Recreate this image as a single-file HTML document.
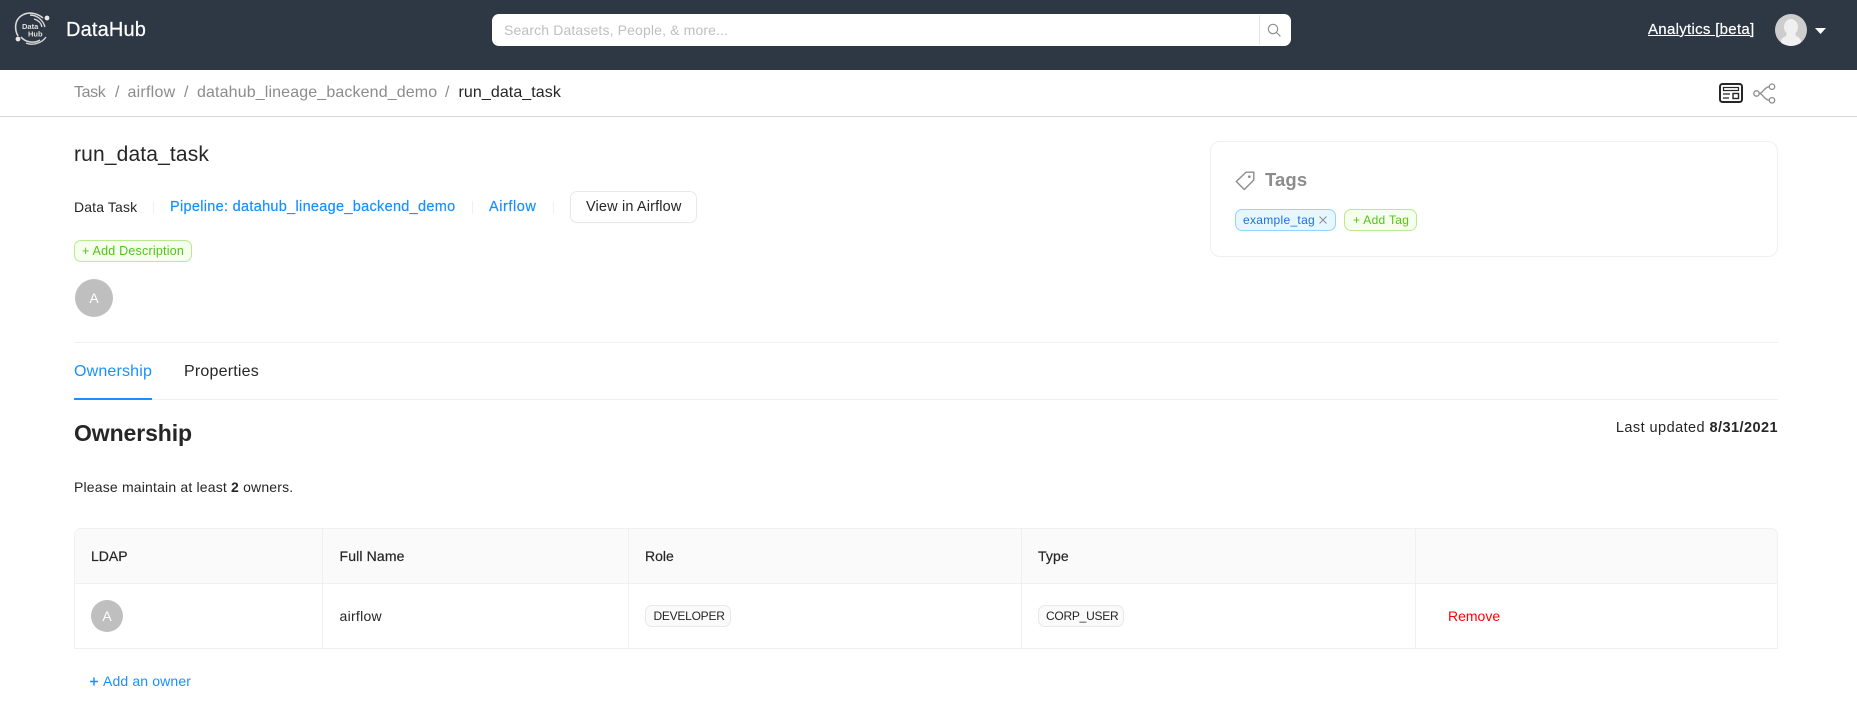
<!DOCTYPE html>
<html lang="en"><head><meta charset="utf-8"><title>DataHub</title>
<style>
html,body{margin:0;padding:0;background:#fff}
body{width:1857px;height:728px;position:relative;overflow:hidden;font-family:"Liberation Sans",sans-serif;font-size:14px;color:#262626}
.a{position:absolute;box-sizing:border-box}
.t{position:absolute;white-space:nowrap;line-height:20px;height:20px}
.med{-webkit-text-stroke:.2px currentColor}
.g{color:#8c8c8c}.b{color:#1890ff}
.chip{position:absolute;box-sizing:border-box;border-radius:7px}
.line{position:absolute;background:#f0f0f0}
</style></head><body>

<div class="a" style="left:0;top:0;width:1857px;height:70px;background:#2e3845"></div>
<svg class="a" style="left:12px;top:9px" width="42" height="38" viewBox="0 0 42 38" fill="none" stroke="#d9d9d9">
<path d="M6 27C2 20 3 11 9 7C16 2 25 4 31 9" stroke-width="1.6"/>
<path d="M9 28C13 33 22 35 28 31" stroke-width="1.5"/>
<path d="M18 6C25 6 31 11 33 18" stroke-width="1.4"/>
<path d="M22 10C26 11 29 14 30 18" stroke-width="1.3"/>
<path d="M14 34C21 37 30 34 34 28" stroke-width="1.3"/>
<circle cx="35" cy="9" r="2.4" fill="#e8e8e8" stroke="none"/><circle cx="6" cy="30" r="2.4" fill="#e8e8e8" stroke="none"/>
<text x="10" y="20" font-family="Liberation Sans" font-size="7.5" font-weight="700" fill="#e0e0e0" stroke="none">Data</text>
<text x="16" y="27.500" font-family="Liberation Sans" font-size="7.5" font-weight="700" fill="#e0e0e0" stroke="none">Hub</text>
</svg>
<div class="t med" style="left:66px;top:20px;font-size:20px;color:#fff;letter-spacing:.15px">DataHub</div>

<div class="a" style="left:492px;top:14px;width:799px;height:32px;background:#fff;border-radius:7px"></div>
<div class="t" style="left:504px;top:20px;color:#bfbfbf;letter-spacing:.14px">Search Datasets, People, &amp; more...</div>
<div class="line" style="left:1259px;top:15px;width:1px;height:30px;background:#e6e6e6"></div>
<svg class="a" style="left:1267px;top:23px" width="14" height="14" viewBox="0 0 14 14" fill="none" stroke="#8c8c8c" stroke-width="1.1"><circle cx="6" cy="6" r="4.700"/><path d="M9.400 9.400L13.400 13.400"/></svg>

<div class="t med" style="left:1648px;top:20px;font-size:15px;color:#fff;letter-spacing:.3px;text-decoration:underline">Analytics [beta]</div>
<svg class="a" style="left:1775px;top:14px" width="32" height="32" viewBox="0 0 32 32"><defs><clipPath id="c"><circle cx="16" cy="16" r="16"/></clipPath></defs><circle cx="16" cy="16" r="16" fill="#cdcdcd"/><g clip-path="url(#c)" fill="#f0f0f0"><ellipse cx="16" cy="13" rx="7" ry="8"/><path d="M12 18h8l1 4c3 1.500 5 2.500 5 6v5H6v-5c0-3.500 2-4.500 5-6z"/></g></svg>
<svg class="a" style="left:1815px;top:28px" width="11" height="6" viewBox="0 0 11 6"><path d="M0 0H11L5.500 6Z" fill="#fff"/></svg>

<div class="t g" style="left:74px;top:83px;font-size:16px;letter-spacing:-.4px">Task</div>
<div class="t g" style="left:115px;top:83px;font-size:16px">/</div>
<div class="t g" style="left:127.500px;top:83px;font-size:16px;letter-spacing:.24px">airflow</div>
<div class="t g" style="left:184px;top:83px;font-size:16px">/</div>
<div class="t g" style="left:197px;top:83px;font-size:16px;letter-spacing:.13px">datahub_lineage_backend_demo</div>
<div class="t g" style="left:445px;top:83px;font-size:16px">/</div>
<div class="t" style="left:458.500px;top:83px;font-size:16px;letter-spacing:.08px">run_data_task</div>
<svg class="a" style="left:1719px;top:83px" width="24" height="20" viewBox="0 0 24 20" fill="none" stroke="#262626"><rect x="1" y="1" width="22" height="18" rx="2.500" stroke-width="2"/><rect x="4.500" y="4.500" width="15" height="3" stroke-width="1.200"/><path d="M4 11H11M4 15H10" stroke-width="1.200"/><rect x="14" y="10.500" width="5.500" height="5" stroke-width="1.400"/></svg>
<svg class="a" style="left:1753px;top:83px" width="23" height="21" viewBox="0 0 23 21" fill="none" stroke="#8c8c8c" stroke-width="1.300"><circle cx="3.500" cy="10.500" r="2.700"/><circle cx="19" cy="3.700" r="2.700"/><circle cx="19" cy="17.300" r="2.700"/><path d="M6.200 10.500C10 10.500 11 4 16.300 3.700M6.200 10.500C10 10.500 11 17 16.300 17.300"/></svg>
<div class="line" style="left:0;top:116px;width:1857px;height:1px;background:#d9d9d9"></div>

<div class="t" style="left:74px;top:145px;font-size:21px;letter-spacing:.15px">run_data_task</div>
<div class="t" style="left:74px;top:197px;letter-spacing:.14px">Data Task</div>
<div class="line" style="left:153px;top:201px;width:1px;height:13px"></div>
<div class="t b med" style="left:170px;top:197px;font-size:14.500px;letter-spacing:.3px">Pipeline: datahub_lineage_backend_demo</div>
<div class="line" style="left:472px;top:201px;width:1px;height:13px"></div>
<div class="t b med" style="left:489px;top:197px;font-size:14.500px;letter-spacing:.55px">Airflow</div>
<div class="line" style="left:553px;top:201px;width:1px;height:13px"></div>
<div class="a" style="left:570px;top:191px;width:127px;height:32px;border:1px solid #e8e8e8;border-radius:7px;box-shadow:0 1px 1px rgba(0,0,0,.02)"></div>
<div class="t" style="left:586px;top:197px;font-size:14.500px;letter-spacing:.15px">View in Airflow</div>
<div class="chip" style="left:74px;top:240px;width:118px;height:22px;background:#f6ffed;border:1px solid #b7eb8f"></div>
<div class="t" style="left:82px;top:241px;font-size:12.500px;color:#52c41a;letter-spacing:.22px">+ Add Description</div>
<div class="a" style="left:75px;top:279px;width:38px;height:38px;border-radius:50%;background:#bfbfbf"></div>
<div class="t" style="left:75px;top:288px;width:38px;text-align:center;color:#fff;font-size:14px">A</div>

<div class="a" style="left:1210px;top:141px;width:568px;height:116px;border:1px solid #f0f0f0;border-radius:10px"></div>
<svg class="a" style="left:1235px;top:171px" width="20" height="20" viewBox="0 0 20 20" fill="none" stroke="#8c8c8c" stroke-width="1.400"><path d="M11 1.200H18.800V9L9.300 18.500L1.300 10.500Z" stroke-linejoin="round"/><circle cx="14.300" cy="5.700" r="1.300" fill="#8c8c8c" stroke="none"/></svg>
<div class="t" style="left:1265px;top:170px;font-size:18.500px;font-weight:700;color:#8c8c8c;letter-spacing:.1px">Tags</div>
<div class="chip" style="left:1235px;top:209px;width:101px;height:22px;background:#e6f7ff;border:1px solid #91d5ff"></div>
<div class="t" style="left:1243px;top:210px;font-size:12px;color:#1d6fdc;letter-spacing:.3px">example_tag</div>
<svg class="a" style="left:1319px;top:216px" width="8" height="8" viewBox="0 0 8 8" stroke="#8c8c8c" stroke-width="1"><path d="M.5 .5L7.500 7.500M7.500 .5L.5 7.500"/></svg>
<div class="chip" style="left:1344px;top:209px;width:73px;height:22px;background:#f6ffed;border:1px solid #b7eb8f"></div>
<div class="t" style="left:1353px;top:210px;font-size:12px;color:#52c41a;letter-spacing:.3px">+ Add Tag</div>

<div class="line" style="left:74px;top:342px;width:1704px;height:1px"></div>
<div class="t b" style="left:74px;top:362px;font-size:16px;letter-spacing:.17px">Ownership</div>
<div class="t" style="left:184px;top:362px;font-size:16px;letter-spacing:.2px">Properties</div>
<div class="line" style="left:74px;top:399px;width:1704px;height:1px"></div>
<div class="a" style="left:74px;top:398px;width:78px;height:2px;background:#1890ff"></div>
<div class="t" style="left:74px;top:423px;font-size:23px;font-weight:700;letter-spacing:-.1px">Ownership</div>
<div class="t" style="right:79px;top:418px;font-size:14.500px;letter-spacing:.44px">Last updated <b>8/31/2021</b></div>
<div class="t" style="left:74px;top:477px;letter-spacing:.18px">Please maintain at least <b>2</b> owners.</div>

<div class="a" style="left:74px;top:528px;width:1704px;height:121px;border:1px solid #f0f0f0;border-radius:7px 7px 0 0"></div>
<div class="a" style="left:75px;top:529px;width:1702px;height:54px;background:#fafafa;border-radius:6px 6px 0 0"></div>
<div class="line" style="left:75px;top:583px;width:1702px;height:1px"></div>
<div class="line" style="left:322px;top:529px;width:1px;height:119px"></div>
<div class="line" style="left:628px;top:529px;width:1px;height:119px"></div>
<div class="line" style="left:1021px;top:529px;width:1px;height:119px"></div>
<div class="line" style="left:1415px;top:529px;width:1px;height:119px"></div>
<div class="t med" style="left:91px;top:546px">LDAP</div>
<div class="t med" style="left:339.500px;top:546px;letter-spacing:.14px">Full Name</div>
<div class="t med" style="left:645px;top:546px">Role</div>
<div class="t med" style="left:1038px;top:546px;letter-spacing:.1px">Type</div>
<div class="a" style="left:91px;top:600px;width:32px;height:32px;border-radius:50%;background:#bfbfbf"></div>
<div class="t" style="left:91px;top:606px;width:32px;text-align:center;color:#fff">A</div>
<div class="t" style="left:339.500px;top:606px;letter-spacing:.28px">airflow</div>
<div class="chip" style="left:645px;top:605px;width:86px;height:22px;background:#fafafa;border:1px solid #e8e8e8"></div>
<div class="t" style="left:653.500px;top:606px;font-size:12px;letter-spacing:-.25px">DEVELOPER</div>
<div class="chip" style="left:1038px;top:605px;width:86px;height:22px;background:#fafafa;border:1px solid #e8e8e8"></div>
<div class="t" style="left:1046px;top:606px;font-size:12px;letter-spacing:-.25px">CORP_USER</div>
<div class="t" style="left:1448px;top:606px;color:#ff0000">Remove</div>
<svg class="a" style="left:90px;top:677px" width="9" height="9" viewBox="0 0 9 9" stroke="#1890ff" stroke-width="1.500"><path d="M0 4.500H8M4 .5V8.500"/></svg>
<div class="t b" style="left:103px;top:671px;letter-spacing:.14px">Add an owner</div>
</body></html>
